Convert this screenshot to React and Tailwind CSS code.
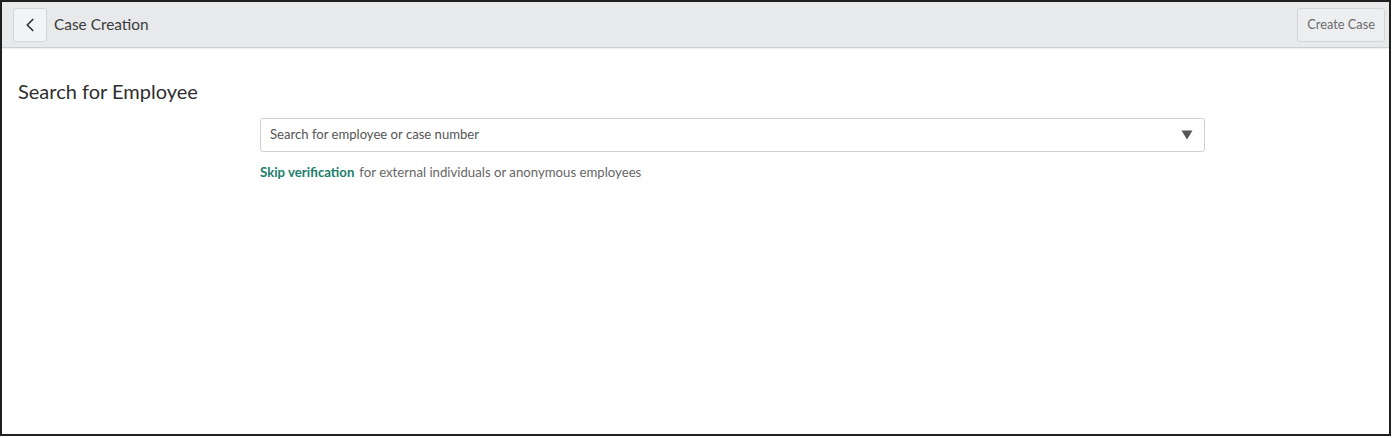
import { ChevronLeft } from "lucide-react";

const SearchForEmployee = () => {
  return (
    <div className="pt-[30px] pl-[16px]">
      <h2 className="text-[20px] leading-[26px] text-[#2e2e2e]">Search for Employee</h2>
      <div className="mt-[14px] ml-[242px] w-[945px]">
        <button className="flex h-[34px] w-full items-center justify-between rounded-[3px] border border-[#cfd1d4] bg-white pl-[9px] pr-[11px] text-left text-[13.1px] text-[#555]">
          <span>Search for employee or case number</span>
          <svg width="12" height="10" viewBox="0 0 12 10" className="fill-[#555]">
            <path d="M0.5 0.5h11L6 9.5z" />
          </svg>
        </button>
        <p className="mt-[11px] text-[13.2px] text-[#666]">
          <a href="#" className="font-bold text-[#1c7d6c]">Skip verification</a>
          <span className="ml-[5px]">for external individuals or anonymous employees</span>
        </p>
      </div>
    </div>
  );
};

const App = () => {
  return (
    <div className="h-[438px] w-[1392px] bg-white font-['Lato',sans-serif]">
      <div className="h-[436px] w-[1391px] border-2 border-[#1f1f1f] bg-white">
        <header className="flex h-[46px] items-center justify-between border-b border-[#cdd0d3] bg-[#e7e9eb] pl-[11px] pr-[4px] shadow-[0_1px_1px_rgba(0,0,0,0.06)]">
          <div className="flex items-center gap-[7px]">
            <button className="flex h-[34px] w-[34px] items-center justify-center rounded-[3px] border border-[#d3d5d8] bg-[#f3f4f5]">
              <ChevronLeft size={22} strokeWidth={1.8} className="text-[#2e2e2e]" />
            </button>
            <span className="text-[15.4px] text-[#3a3a3a]">Case Creation</span>
          </div>
          <button className="h-[34px] rounded-[3px] border border-[#d3d5d8] bg-[#eceef0] px-[9px] text-[12.8px] text-[#6b6b6b]">
            Create Case
          </button>
        </header>
        <SearchForEmployee />
      </div>
    </div>
  );
};

export default App;
